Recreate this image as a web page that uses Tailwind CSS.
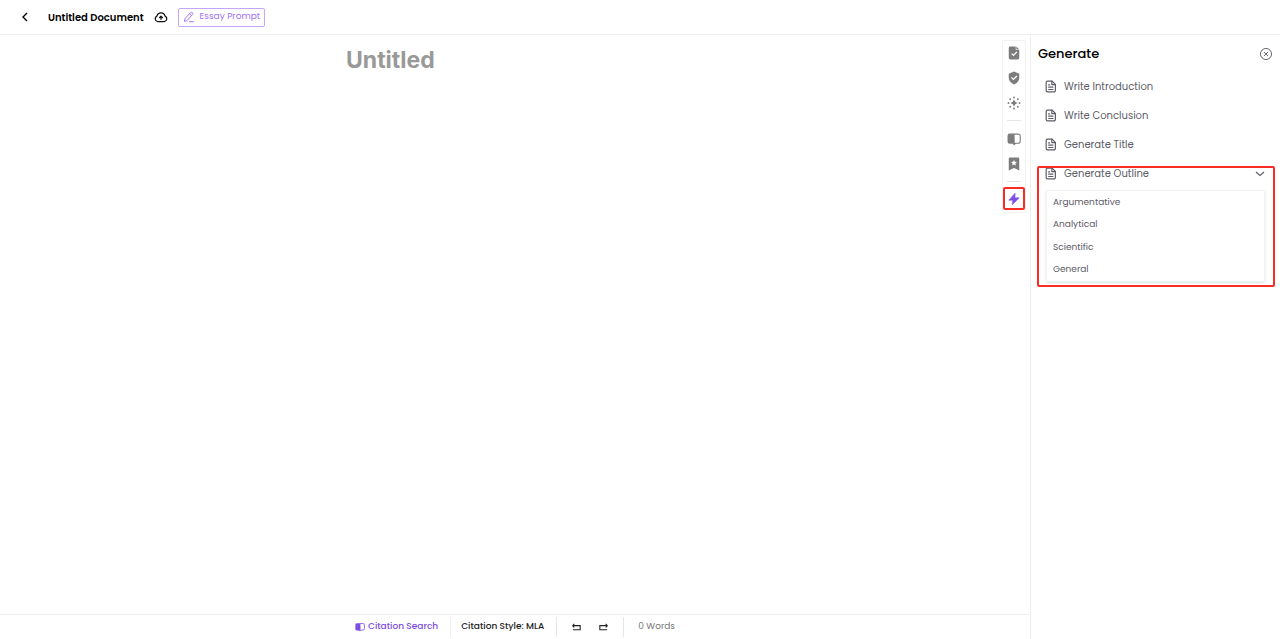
<!DOCTYPE html>
<html lang="en">
<head>
<meta charset="utf-8">
<meta name="viewport" content="width=device-width, initial-scale=1">
<title>Untitled Document</title>
<script src="https://cdn.jsdelivr.net/npm/@tailwindcss/browser@4"></script>
</head>
<body class="flex h-screen flex-col bg-white font-['Poppins','Inter',sans-serif] text-[10px] text-[#5c5c66]">
<svg class="hidden" aria-hidden="true">
  <symbol id="doc" viewBox="0 0 24 24" fill="none" stroke="currentColor" stroke-width="2.200" stroke-linejoin="round" stroke-linecap="round"><path d="M15 2H6.500A2.500 2.500 0 0 0 4 4.500v15A2.500 2.500 0 0 0 6.500 22h12a2.500 2.500 0 0 0 2.500-2.500V8z"/><path d="M14.500 2v6.500H21M8.500 9h2M8.500 13h8M8.500 17.500h8"/></symbol>
  <symbol id="book" viewBox="0 0 26 24"><path fill="currentColor" d="M13 2H5a4 4 0 0 0-4 4v11a4 4 0 0 0 4 4h5.500l2.500 2z"/><path fill="none" stroke="currentColor" stroke-width="2" d="M13 3h8a3.500 3.500 0 0 1 3.500 3.500v10A3.500 3.500 0 0 1 21 20h-5l-2.500 2z"/></symbol>
</svg>
<header class="flex h-[35px] shrink-0 items-center border-b border-[#eeeeee] pl-5">
  <button aria-label="Back" class="text-black"><svg class="size-3" viewBox="0 0 12 12" fill="none" stroke="currentColor" stroke-width="1.400"><path d="M7 2 3 6l4 4"/></svg></button>
  <h1 class="ml-4 text-[10px] font-semibold text-black">Untitled Document</h1>
  <svg class="ml-2.5 size-3.5 text-[#111111]" viewBox="0 0 24 24" fill="none" stroke="currentColor" stroke-width="2.200" stroke-linecap="round" stroke-linejoin="round"><path d="M6.500 20A5 5 0 0 1 5 10.500a7.200 7.200 0 0 1 14 0A5 5 0 0 1 17.500 20z"/><path d="M12 16v-5M9.500 13l2.500-2.500 2.500 2.500"/></svg>
  <button class="ml-2.5 flex h-[19px] items-center gap-[5px] rounded-xs border border-[#c4a6fb] px-1 text-[9px] text-[#a274f5]">
    <svg class="size-3" viewBox="0 0 24 24" fill="none" stroke="currentColor" stroke-width="2" stroke-linecap="round" stroke-linejoin="round"><path d="m3 20 1-5L15 3.500a2.500 2.500 0 0 1 4 3.500L8 19zM13 5.500l4 3.500M13 21.500h8"/></svg>
    Essay Prompt
  </button>
</header>
<div class="flex min-h-0 flex-1">
  <div class="flex min-w-0 flex-1 flex-col">
    <main class="flex min-h-0 flex-1 items-start justify-between pr-1 pt-[5px]">
      <h2 contenteditable="true" class="ml-[346px] mt-1 font-['Inter',sans-serif] text-[23px] leading-8 font-bold text-[#999999] outline-none">Untitled</h2>
      <nav aria-label="Tools" class="flex w-6 flex-col items-center rounded-xs border border-[#f2f2f2] pb-0.5 text-[#7d7d7d]">
        <button aria-label="Review" class="flex h-6 items-center"><svg class="size-3.5" viewBox="0 0 24 24"><path fill="currentColor" d="M5 1h10v6h6v13a3 3 0 0 1-3 3H6a3 3 0 0 1-3-3V4a3 3 0 0 1 2-3zM16 1l5 5h-5z"/><path d="m8 13 3 3 6-6" fill="none" stroke="#fff" stroke-width="2.200"/></svg></button>
        <button aria-label="Plagiarism check" class="flex h-[25px] items-center"><svg class="size-3.5" viewBox="0 0 24 24"><path fill="currentColor" d="m12 1 9 3.500V12c0 5-4 9-9 11-5-2-9-6-9-11V4.500z"/><path d="m7.500 11 3.500 3.500 6-6" fill="none" stroke="#fff" stroke-width="2.200"/></svg></button>
        <button aria-label="Enhance" class="flex h-[25px] items-center"><svg class="size-3.5" viewBox="0 0 24 24" fill="currentColor"><path d="m12 6 2.200 3.800L18 12l-3.800 2.200L12 18l-2.200-3.800L6 12l3.800-2.200z"/><circle cx="12" cy="2.500" r="1.600"/><circle cx="12" cy="21.500" r="1.600"/><circle cx="2.500" cy="12" r="1.600"/><circle cx="21.500" cy="12" r="1.600"/><circle cx="5.500" cy="5.500" r="1.600"/><circle cx="18.500" cy="5.500" r="1.600"/><circle cx="5.500" cy="18.500" r="1.600"/><circle cx="18.500" cy="18.500" r="1.600"/></svg></button>
        <hr class="my-[5px] w-3.5 border-[#e5e5e5]">
        <button aria-label="Citations" class="flex h-[25px] items-center"><svg class="size-3.5"><use href="#book"/></svg></button>
        <button aria-label="Saved" class="flex h-[25px] items-center"><svg class="size-3.5" viewBox="0 0 24 24"><path fill="currentColor" d="M5 1h14a2 2 0 0 1 2 2v20l-9-4-9 4V3a2 2 0 0 1 2-2z"/><path fill="#fff" d="m12 5 1.500 3.300 3.500.4-2.600 2.400.7 3.500L12 12.900l-3.100 1.700.7-3.500L7 8.700l3.500-.4z"/></svg></button>
        <hr class="my-[5px] w-3.5 border-[#e5e5e5]">
        <button aria-label="Generate" class="flex h-[23px] w-[22px] items-center justify-center rounded-xs border-2 border-[#f92d26] text-[#7c4fe0]"><svg class="size-3.5" viewBox="0 0 24 24"><path fill="currentColor" stroke="currentColor" stroke-linejoin="round" d="M14 2 3 14h7l-1 8L21 10h-7.500z"/></svg></button>
      </nav>
    </main>
    <footer class="flex h-[25px] shrink-0 items-center justify-center border-t border-[#eeeeee] text-[9px] font-medium">
      <button class="flex items-center gap-[3px] pr-3 text-[#7c4fe0]"><svg class="size-2.5"><use href="#book"/></svg>Citation Search</button>
      <button class="h-5 border-l border-[#eeeeee] pl-2.5 pr-3 text-[#1c1c1c]">Citation Style: MLA</button>
      <div class="flex h-5 items-center gap-4 border-x border-[#e5e5e5] px-3.5 text-[#222222]">
        <button aria-label="Undo"><svg class="size-[11px]" viewBox="0 0 12 12" fill="none" stroke="currentColor" stroke-width="1.200"><path d="M3.500 2 2 4h8v4.500H2M2 4l1.500 2"/></svg></button>
        <button aria-label="Redo"><svg class="size-[11px]" viewBox="0 0 12 12" fill="none" stroke="currentColor" stroke-width="1.200"><path d="M8.500 2 10 4H2v4.500h8M10 4 8.500 6"/></svg></button>
      </div>
      <span class="pl-3.5 font-normal text-[#777777]">0 Words</span>
    </footer>
  </div>
  <aside class="w-[250px] shrink-0 border-l border-[#eeeeee] px-[7px] pt-[9px]">
    <div class="flex h-5 items-center justify-between">
      <h2 class="text-[13px] font-medium text-black">Generate</h2>
      <button aria-label="Close"><svg class="size-3.5" viewBox="0 0 24 24" fill="none" stroke="currentColor" stroke-width="1.600"><circle cx="12" cy="12" r="9.500"/><path d="m8.500 8.500 7 7m0-7-7 7"/></svg></button>
    </div>
    <div class="mt-2 flex flex-col pl-1.5">
      <button class="flex h-[29px] items-center gap-[7px]"><svg class="size-[13px]"><use href="#doc"/></svg>Write Introduction</button>
      <button class="flex h-[29px] items-center gap-[7px]"><svg class="size-[13px]"><use href="#doc"/></svg>Write Conclusion</button>
      <button class="flex h-[29px] items-center gap-[7px]"><svg class="size-[13px]"><use href="#doc"/></svg>Generate Title</button>
    </div>
    <section class="relative px-1.5">
      <button aria-expanded="true" class="flex h-[29px] w-full items-center gap-[7px] pr-px"><svg class="size-[13px]"><use href="#doc"/></svg>Generate Outline<svg class="ml-auto size-3" viewBox="0 0 12 12" fill="none" stroke="currentColor" stroke-width="1.200"><path d="m2 4 4 3.500L10 4"/></svg></button>
      <div class="mx-0.5 mt-0.5 flex flex-col rounded-xs border border-[#f2f2f2] text-[9px] shadow-sm">
        <button class="h-[23px] px-1.5 text-left">Argumentative</button>
        <button class="h-[22px] px-1.5 text-left">Analytical</button>
        <button class="h-[23px] px-1.5 text-left">Scientific</button>
        <button class="h-[22px] px-1.5 text-left">General</button>
      </div>
      <div class="pointer-events-none absolute -right-0.5 -bottom-[5px] -left-px top-[7px] rounded-xs border-2 border-[#f92d26]"></div>
    </section>
  </aside>
</div>
</body>
</html>
